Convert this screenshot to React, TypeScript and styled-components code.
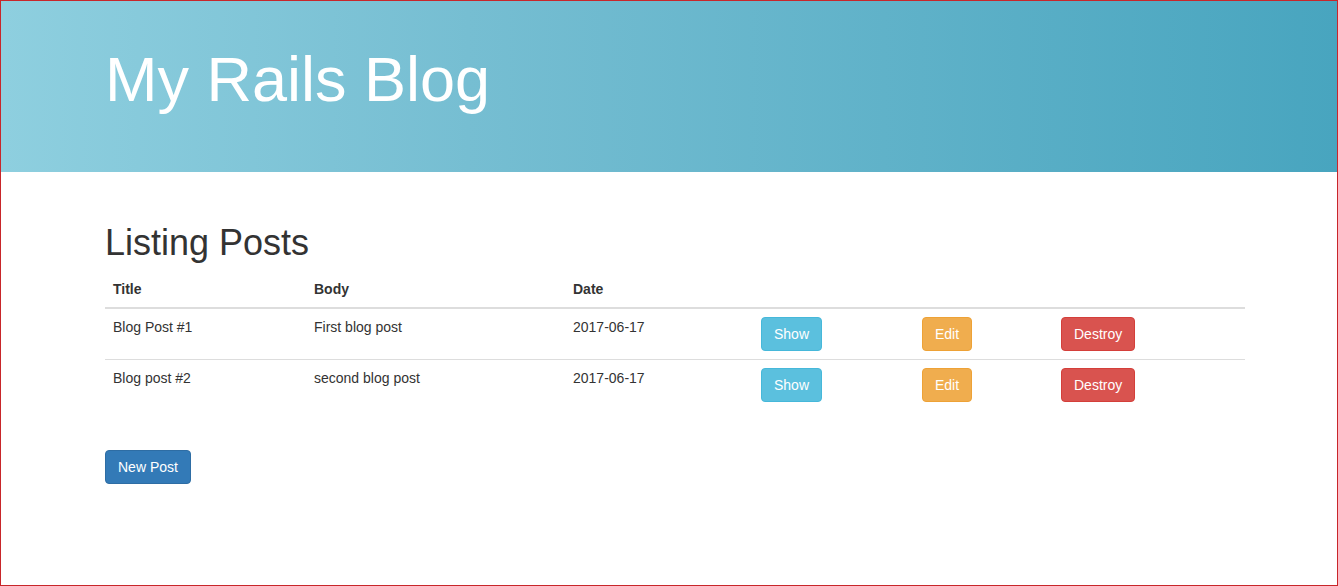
import React from "react";
import styled, { createGlobalStyle } from "styled-components";

const Global = createGlobalStyle`
  html, body { margin: 0; padding: 0; background: #fff; }
  body {
    font-family: "Liberation Sans", Arial, Helvetica, sans-serif;
    font-size: 14px;
    line-height: 1.42857143;
    color: #333;
  }
  * { box-sizing: border-box; }
`;

const Frame = styled.div`
  width: 1338px;
  height: 586px;
  border: 1px solid #c8262a;
  display: flex;
  flex-direction: column;
  overflow: hidden;
`;

const Jumbotron = styled.header`
  height: 171px;
  flex: none;
  padding: 44px 0 0 104px;
  background: linear-gradient(90deg, #8ecfdf 0%, #76bed2 35%, #48a5bf 100%);
`;

const BrandTitle = styled.h1`
  margin: 0;
  font-size: 63px;
  line-height: 1.1;
  font-weight: 400;
  color: #fff;
`;

const Content = styled.main`
  padding: 51px 0 0 104px;
  width: 1244px;
  display: flex;
  flex-direction: column;
`;

const PageTitle = styled.h1`
  margin: 0 0 8px;
  font-size: 36px;
  line-height: 1.1;
  font-weight: 400;
  color: #333;
`;

const Table = styled.table`
  width: 1140px;
  border-collapse: collapse;
  border-spacing: 0;
  table-layout: fixed;
  margin-bottom: 40px;
`;

const Th = styled.th<{ $w: number }>`
  width: ${(p) => p.$w}px;
  text-align: left;
  font-weight: 700;
  padding: 8px;
  line-height: 20px;
  vertical-align: bottom;
  border-bottom: 2px solid #ddd;
`;

const Td = styled.td`
  padding: 8px;
  line-height: 20px;
  vertical-align: top;
`;

const Tr = styled.tr`
  & + & > td {
    border-top: 1px solid #ddd;
  }
`;

const variants = {
  info: { bg: "#5bc0de", border: "#46b8da" },
  warning: { bg: "#f0ad4e", border: "#eea236" },
  danger: { bg: "#d9534f", border: "#d43f3a" },
  primary: { bg: "#337ab7", border: "#2e6da4" },
};

const Button = styled.a<{ $v: keyof typeof variants }>`
  display: inline-block;
  padding: 6px 12px;
  font-size: 14px;
  line-height: 20px;
  border-radius: 4px;
  border: 1px solid ${(p) => variants[p.$v].border};
  background: ${(p) => variants[p.$v].bg};
  color: #fff;
  text-decoration: none;
  white-space: nowrap;
  cursor: pointer;
`;

const Footer = styled.div`
  display: flex;
`;

const cols = [
  { label: "Title", w: 201 },
  { label: "Body", w: 259 },
  { label: "Date", w: 188 },
  { label: "", w: 161 },
  { label: "", w: 139 },
  { label: "", w: 192 },
];

const posts = [
  { title: "Blog Post #1", body: "First blog post", date: "2017-06-17" },
  { title: "Blog post #2", body: "second blog post", date: "2017-06-17" },
];

export default function App() {
  return (
    <>
      <Global />
      <Frame>
        <Jumbotron>
          <BrandTitle>My Rails Blog</BrandTitle>
        </Jumbotron>
        <Content>
          <PageTitle>Listing Posts</PageTitle>
          <Table>
            <thead>
              <tr>
                {cols.map((c, i) => (
                  <Th key={i} $w={c.w}>
                    {c.label}
                  </Th>
                ))}
              </tr>
            </thead>
            <tbody>
              {posts.map((p, i) => (
                <Tr key={i}>
                  <Td>{p.title}</Td>
                  <Td>{p.body}</Td>
                  <Td>{p.date}</Td>
                  <Td>
                    <Button $v="info">Show</Button>
                  </Td>
                  <Td>
                    <Button $v="warning">Edit</Button>
                  </Td>
                  <Td>
                    <Button $v="danger">Destroy</Button>
                  </Td>
                </Tr>
              ))}
            </tbody>
          </Table>
          <Footer>
            <Button $v="primary">New Post</Button>
          </Footer>
        </Content>
      </Frame>
    </>
  );
}
